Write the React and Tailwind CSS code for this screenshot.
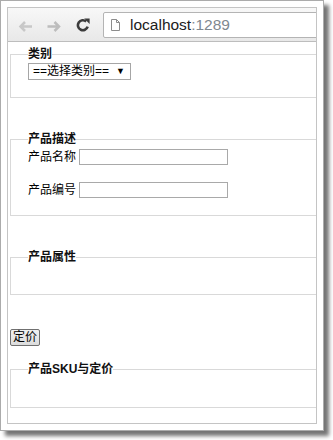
import React from "react";

// old-style browser window: toolbar + a plain form page with fieldsets

const PAGE_FONT = "font-['Liberation_Sans','Noto_Sans_CJK_SC',sans-serif]";

function Arrow({ dir = "left", color }) {
  const d = dir === "left" ? "M14 5.5H2.5 M7 1L2.5 5.5 7 10" : "M0.5 5.5H12 M7.5 1L12 5.5 7.5 10";
  return (
    <svg width="15" height="11" viewBox="0 0 15 11" fill="none">
      <path d={d} stroke={color} strokeWidth="2.5" />
    </svg>
  );
}

function Reload() {
  return (
    <svg width="14" height="14" viewBox="0 0 14 14" fill="none">
      <path d="M10.2 3.4A5 5 0 1 0 11.7 8.7" stroke="#3c3c3c" strokeWidth="2.6" />
      <polygon points="8.2,0.6 13.6,0.6 13.6,6" fill="#3c3c3c" />
    </svg>
  );
}

function PageIcon() {
  return (
    <svg width="9" height="12" viewBox="0 0 9 12" fill="none">
      <path d="M0.5 0.5H5.5L8.5 3.5V11.5H0.5Z" stroke="#8c8c8c" fill="#fff" />
      <path d="M5.5 0.5V3.5H8.5" stroke="#8c8c8c" />
    </svg>
  );
}

function Toolbar() {
  return (
    <div className="h-[34px] shrink-0 flex items-center pl-[10px] border-b border-[#bdbdbd] bg-linear-to-b from-[#f8f8f8] to-[#e8e8e8]">
      <div className="mt-[3px]">
        <Arrow dir="left" color="#c8c8c8" />
      </div>
      <div className="mt-[3px] ml-[14px]">
        <Arrow dir="right" color="#bdbdbd" />
      </div>
      <div className="ml-[14px] mt-[1px]">
        <Reload />
      </div>
      <div className="ml-[13px] -mr-[4px] flex-1 h-[26px] mt-[1px] bg-white border border-[#b4b4b4] rounded-[2px] flex items-center pl-[7px]">
        <PageIcon />
        <span className="ml-[10px] font-['Liberation_Sans',sans-serif] text-[15.5px] leading-none text-[#202020]">
          localhost<span className="text-[#808890]">:1289</span>
        </span>
      </div>
    </div>
  );
}

function Box({ title, className = "", children, pt = "pt-[3px]", pb = "pb-[17px]" }) {
  return (
    <fieldset className={`ml-[2px] -mr-[2px] border border-[#d9d9d9] pl-[17px] ${pt} ${pb} ${className}`}>
      <legend className="font-bold text-[12px] leading-[12px] text-[#111]">{title}</legend>
      {children}
    </fieldset>
  );
}

export default function App() {
  return (
    <div className="w-[333px] h-[440px] bg-white overflow-hidden">
      <div className="w-[324px] h-[431px] border border-[#ababab] bg-white p-[6px] shadow-[5px_5px_4px_rgba(0,0,0,0.55)]">
        <div className="h-full border border-[#c4c4c4] flex flex-col overflow-hidden">
          <Toolbar />
          <div className={`flex-1 overflow-hidden ${PAGE_FONT} text-[12px] leading-[12px] text-black`}>
            <Box title="类别" className="mt-[6px]">
              <div className="relative w-[103px] h-[17px]">
                <select className="appearance-none w-full h-full border border-[#a6a6a6] bg-white pl-[4px] text-[12px] leading-[15px] rounded-none outline-none">
                  <option>==选择类别==</option>
                </select>
                <span className="pointer-events-none absolute right-[6px] top-[3px] text-[9px] leading-[10px]">▼</span>
              </div>
            </Box>

            <Box title="产品描述" className="mt-[35px]" pt="pt-[4px]">
              <div className="flex items-center">
                <label>产品名称</label>
                <input className="ml-[3px] w-[149px] h-[16px] border border-[#a9a9a9] bg-white outline-none" />
              </div>
              <div className="flex items-center mt-[17px]">
                <label>产品编号</label>
                <input className="ml-[3px] w-[149px] h-[16px] border border-[#a9a9a9] bg-white outline-none" />
              </div>
            </Box>

            <Box title="产品属性" className="mt-[35px]" pt="pt-0">
              <div className="h-[14px]" />
            </Box>

            <button className="mt-[34px] ml-[2px] h-[17px] px-[2px] border border-[#707070] rounded-[2px] bg-linear-to-b from-[#f0f0f0] to-[#dcdcdc] text-[12px] leading-[13px] block">
              定价
            </button>

            <Box title="产品SKU与定价" className="mt-[17px]" pt="pt-0">
              <div className="h-[15px]" />
            </Box>
          </div>
        </div>
      </div>
    </div>
  );
}
